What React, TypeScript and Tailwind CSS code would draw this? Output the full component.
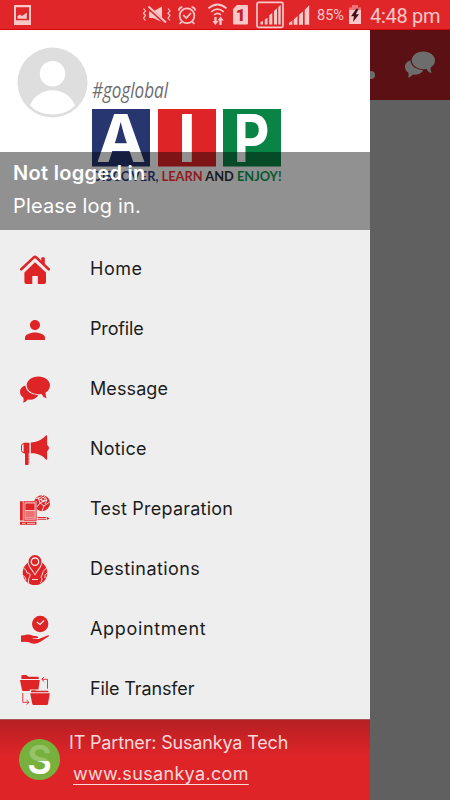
import type { ReactNode } from "react";
import { MdPerson } from "react-icons/md";

const Svg = ({ children }: { children: ReactNode }) => (
  <svg viewBox="0 0 30 30" className="size-[30px]" fill="currentColor">{children}</svg>
);

const HomeIcon = () => (
  <Svg>
    <path d="M1.3 14.3 13.8 2.4Q15 1.4 16.2 2.4L28.7 14.3" fill="none" stroke="currentColor" strokeWidth="2.6" strokeLinecap="round" />
    <path d="M21.3 3.2Q21.3 2.3 22.2 2.3H23.9Q24.8 2.3 24.8 3.2V10L21.3 6.5Z" />
    <path d="M15 7.3 26 17.6V27Q26 29 24 29H17.8V21H12.3V29H6.4Q4.4 29 4.4 27V17.6Z" />
  </Svg>
);

const ChatIcon = ({ id }: { id: string }) => (
  <Svg>
    <mask id={id}>
      <rect width="30" height="30" fill="white" />
      <ellipse cx="18.3" cy="10.3" rx="12.8" ry="10" fill="black" />
    </mask>
    <path mask={`url(#${id})`} d="M9 10C4 10 0 12.6 0 16.8C0 19.4 1.3 21.4 3.4 22.8Q4 25.5 3.2 27.7Q6.4 26.7 7.7 24.5Q14.5 25.4 18 20.7L19 10Z" />
    <path d="M18.3 1.4C24.8 1.4 30 5.4 30 10.3C30 13.5 28.3 16 25.5 17.6Q25.4 20.7 26.6 23.3Q22.8 22 21.5 18.9C13.6 20.2 6.7 16.2 6.7 10.3C6.7 5.4 11.8 1.4 18.3 1.4Z" />
  </Svg>
);

const NoticeIcon = () => (
  <Svg>
    <path d="M10.8 7.6C17 7.4 22 4.9 26 .3Q26.7-.2 27.1.8V9.8Q29 11 29 13Q29 15 27.1 16.3V24.3Q26.7 25.5 26 24.6C22 19.9 17 18.4 10.8 18.3Z" />
    <path d="M3.6 7.8H9.4V18.5H8.6V29.4Q7 30.4 5 29.4V18.5H3.6Z" />
    <path d="M4 8.6Q1.6 8.5 1.5 11V15.5Q1.6 17.5 4 17.5" fill="none" stroke="currentColor" />
    <path d="M9 20.5v1m0 2v1m0 2v1" stroke="currentColor" />
  </Svg>
);

const TestIcon = () => (
  <Svg>
    <circle cx="22" cy="8.2" r="8" />
    <g fill="none" stroke="#eee" strokeWidth=".9">
      <path d="M16 3.5Q21 3 23 0M18 2.5 20 8 27 5 24 1M20 8 17 12M20 8 24 11 29.7 7M24 11 22 16M27 5 25 9M19 4 25 6" />
      <circle cx="23" cy="4.5" r="2" />
    </g>
    <path d="M0 6H17V30H0Z" fill="#eee" />
    <path d="M0 6.3H2.8V25.6H0ZM3.5 6.3H16.6V25.7H3.5ZM0 26.8H16.4V29.8H0Z" />
    <path d="M4.5 7.3H15.7V24.7H4.5Z" fill="#f7bfc0" />
    <path d="M5.4 8.5H14.5V15H5.4ZM5.3 16.6H14.7V17.4H5.3ZM5.3 18.6H14.7V19.4H5.3ZM5.3 20.6H14.7V21.4H5.3ZM5.3 22.8H14.7V23.6H5.3Z" />
    <path d="M2 28.3H5.5M7 28.3H15" stroke="#eee" strokeWidth=".8" />
    <path d="M17.7 22H26V23H17.7ZM17.7 23.7H26V24.7H17.7ZM26.8 21.8 29.7 23.4 26.8 25Z" />
  </Svg>
);

const DestinationIcon = () => (
  <Svg>
    <circle cx="15" cy="17.7" r="12.3" />
    <g fill="none" stroke="#eee" strokeWidth=".9">
      <path d="M3.5 13Q7 15 7 18Q11 18 10 21Q8 23 8.5 28M26.5 13Q22.5 16 22 20Q20 22 22 24Q22 26 20.5 28M3 20.5Q6 22 6 25.5M27 18Q24 20 25 23M12 24.5H18" />
    </g>
    <path d="M15 20.7C13.5 17 7.7 12 7.7 7.2A7.3 7.3 0 0 1 22.3 7.2C22.3 12 16.5 17 15 20.7Z" fill="#eee" />
    <path d="M15 19C13.5 15.5 8.5 11.5 8.5 6.5A6.5 6.5 0 0 1 21.5 6.5C21.5 11.5 16.5 15.5 15 19Z" />
    <circle cx="15" cy="6.7" r="3.7" fill="none" stroke="#eee" strokeWidth="1.3" />
  </Svg>
);

const AppointmentIcon = () => (
  <Svg>
    <circle cx="20.2" cy="9" r="8.2" />
    <path d="M16.8 7 20 9.5 24 5.5" fill="none" stroke="#eee" strokeWidth="1.2" />
    <path d="M1 20.5Q4.5 20.5 7 19.4Q10 19.2 13 20.7L17 21.3Q18.8 21.8 18 23L12.5 23.2 12.6 23.8 18 24Q19.5 24.2 20.5 23.3L28.3 20.3Q29.5 20.4 28.8 21.3L20.5 26.7Q17 28.8 14 28.8Q11 28.3 9 27.2Q7 26.4 1 26.9Z" />
  </Svg>
);

const TransferIcon = () => (
  <Svg>
    <path d="M1.4 3V1Q1.4 0 2.5 0H6.2L8.5 1.8H18Q18.7 1.8 18.7 3V4H1.4Z" />
    <path d="M0 4.9H19.8L18.2 16H3.2Q2.2 16 2 15Z" />
    <path d="M9.7 14.5H30V19H28.6L27.3 30H11.8L9.8 19Z" fill="#eee" />
    <path d="M11 17.2V16.5Q11 15.2 12.2 15.2H15L16.5 15.8H27.5Q28.6 15.8 28.6 17.2ZM10.2 18.3H29.8L28 29Q27.8 30 26.7 30H13.6Q12.5 30 12.3 29Z" />
    <path d="M27.5 13.7V4.3H22M24.2 2 21.7 4.3 24.2 6.6M2.8 18V27.3H8.5M6.5 25 9 27.3 6.5 29.6" fill="none" stroke="currentColor" strokeWidth=".9" />
  </Svg>
);

const MENU = [
  { label: "Home", icon: <HomeIcon />, tracking: "tracking-[0.5px]" },
  { label: "Profile", icon: <MdPerson size={30} />, tracking: "tracking-[-0.15px]" },
  { label: "Message", icon: <ChatIcon id="chat-menu" />, tracking: "tracking-[0.1px]" },
  { label: "Notice", icon: <NoticeIcon />, tracking: "tracking-[0.2px]" },
  { label: "Test Preparation", icon: <TestIcon />, tracking: "tracking-[0.23px]" },
  { label: "Destinations", icon: <DestinationIcon />, tracking: "tracking-[0.42px]" },
  { label: "Appointment", icon: <AppointmentIcon />, tracking: "tracking-[0.67px]" },
  { label: "File Transfer", icon: <TransferIcon />, tracking: "tracking-[-0.12px]" },
];

const StatusBar = () => (
  <header className="flex h-[30px] items-center border-b border-[#d70408] bg-[#e12629] font-['Roboto',sans-serif] text-[#f8c8c9]">
    <svg viewBox="0 0 312 29" className="h-[29px] w-[312px] shrink-0" fill="currentColor">
      <path fillRule="evenodd" d="M14 5H31V25H14ZM16 7.3V20.3H29V7.3Z" />
      <path d="M17.5 18.8V16L20 14.6 22 16 26.8 12.8V18.8Z" />
      <path d="M149 11.5H153L162 6.5V22L153 18H149Z" />
      <path d="M148 7 165.5 23.2" stroke="#e12629" strokeWidth="3.6" />
      <path d="M148.5 6.5 166 22.5" stroke="currentColor" strokeWidth="1.8" />
      <path d="M143.5 8.5 145.5 11 143.5 13.2 145.5 15.6 143.5 18 145.5 20.5M168 8.5 170 11 168 13.2 170 15.6 168 18 170 20.5" fill="none" stroke="currentColor" strokeWidth="1.2" />
      <g fill="none" stroke="currentColor" strokeWidth="1.7">
        <circle cx="187" cy="15.8" r="7.4" />
        <path d="M183.3 15.2 186.3 18 191 13M178.7 10.7Q179 7.4 182.4 7.2M195.3 10.7Q195 7.4 191.6 7.2M181.8 21.5 179.7 24M192.2 21.5 194.3 24" />
        <path d="M208.5 8.3Q217.5.7 226.5 8.3M211.3 11.8Q217.5 6.5 223.7 11.8M214 14.8Q217.5 12 221 14.8" />
      </g>
      <path d="M214.3 17H216.6V21H218.5L215.4 25 212.4 21H214.3ZM219.3 25V20.5H217.5L220.6 16.5 223.8 20.5H221.7V25Z" />
      <path d="M237 5H247Q248 5 248 6V23.5Q248 24.5 247 24.5H234Q233 24.5 233 23.5V9Z" />
      <text x="240.6" y="20.7" fill="#c51d23" fontSize="17" fontWeight="900" textAnchor="middle">1</text>
      <rect x="257" y="2.3" width="26" height="25" rx="1.5" fill="none" stroke="currentColor" strokeWidth="1.7" />
      <path d="M260.5 24.5V22L263 21V24.5ZM264.8 24.5V19.5L267.5 17.8V24.5ZM269.2 24.5V15.5L272.3 12.8V24.5ZM274 24.5V11L277 8.3V24.5ZM278.3 24.5V7L280.7 5V24.5Z" />
      <path d="M289 24.8V23L292.3 20.6V24.8ZM293.7 24.8V19.5L297.5 16V24.8ZM299 24.8V14.8L303 11.5V24.8ZM304.7 24.8V10L309.2 5.3V24.8Z" />
    </svg>
    <span className="ml-[5px] w-[30px] shrink-0 pt-[3px] text-[14.5px] leading-none">85%</span>
    <svg viewBox="0 0 14 20" className="ml-px h-5 w-[14px] shrink-0">
      <path d="M4 0H10V2.5H13V5H1V2.5H4Z" fill="#ec7378" />
      <path d="M1 5H13V19H1Z" fill="#f8c8c9" />
      <path d="M8.5 3.5 3 11.2H6L5 17 11 9.3H7.8L10.5 4Z" fill="#421015" />
    </svg>
    <span className="ml-2 whitespace-nowrap pt-[2px] text-[20px] leading-none tracking-[-0.3px]">4:48 pm</span>
  </header>
);

const Logo = () => (
  <svg viewBox="0 0 370 200" className="h-[200px] w-[370px]">
    <circle cx="52.5" cy="52.5" r="35" fill="#dedede" />
    <circle cx="52.5" cy="43.7" r="12.7" fill="white" />
    <path d="M30 75.5C38 55.3 67 55.3 75 75.5C64 87.5 41 87.5 30 75.5Z" fill="white" />
    <text x="92" y="68" fill="#6c6c70" fontFamily="Open Sans, sans-serif" fontWeight="400" fontStyle="italic" fontSize="21" textLength="76" lengthAdjust="spacingAndGlyphs">#goglobal</text>
    <path d="M92 79H150V136.5H92Z" fill="#27366f" />
    <path d="M158 79H216V136.5H158Z" fill="#df2428" />
    <path d="M223 79H281V136.5H223Z" fill="#0a8445" />
    <g fill="white" fontFamily="Inter, sans-serif" fontWeight="700" fontSize="65.5">
      <text x="96" y="131.5" textLength="50" lengthAdjust="spacingAndGlyphs">A</text>
      <text x="187" y="131.5" textAnchor="middle">I</text>
      <text x="233.5" y="131.5" textLength="36" lengthAdjust="spacingAndGlyphs">P</text>
    </g>
    <text x="92" y="150.7" fontFamily="Lato, sans-serif" fontWeight="700" fontSize="13.5" textLength="189.5" lengthAdjust="spacingAndGlyphs">
      <tspan fill="#2e3f88">DISCOVER, </tspan>
      <tspan fill="#ff3238">LEARN </tspan>
      <tspan fill="#303030">AND </tspan>
      <tspan fill="#0c9c52">ENJOY!</tspan>
    </text>
  </svg>
);

const Drawer = () => (
  <aside className="flex w-[370px] shrink-0 flex-col bg-[#eee]">
    <section className="relative h-[200px] bg-white">
      <Logo />
      <div className="absolute inset-x-0 bottom-0 h-[78px] bg-black/43 pl-[13px] pt-[5px] text-white">
        <h1 className="text-[20px] font-semibold leading-[33px] tracking-[0.3px]">Not logged in</h1>
        <p className="text-[20px] leading-[33px] tracking-[0.15px]">Please log in.</p>
      </div>
    </section>
    <nav className="flex h-[489px] flex-col pt-[10px]">
      {MENU.map(({ label, icon, tracking }) => (
        <a key={label} className="flex h-[60px] shrink-0 items-center gap-10 pl-5 text-[#df2428]">
          {icon}
          <span className={`pb-1 text-[18px] text-[#1c1c1c] ${tracking}`}>{label}</span>
        </a>
      ))}
    </nav>
    <footer className="flex h-[81px] items-center border-t border-[#a95558] bg-linear-to-b from-[#b62024] to-[#df2428] to-45% pl-[19px] text-[#f8d9da]">
      <svg viewBox="0 0 40 40" className="mb-[2px] size-[41px] overflow-visible">
        <linearGradient id="s-fill" gradientUnits="userSpaceOnUse" x1="0" y1="0" x2="0" y2="40">
          <stop offset=".53" stopColor="#96c46b" />
          <stop offset=".55" stopColor="white" />
        </linearGradient>
        <circle cx="20" cy="20" r="20" fill="#78b03e" />
        <text x="8" y="34" fill="url(#s-fill)" fontFamily="Inter, sans-serif" fontWeight="600" fontSize="38" textLength="24" lengthAdjust="spacingAndGlyphs">S</text>
      </svg>
      <div className="mb-1 ml-[9px] whitespace-nowrap text-[18px] leading-[31px]">
        <p className="tracking-[-0.17px]">IT Partner: Susankya Tech</p>
        <a className="ml-1 tracking-[0.33px] underline decoration-1 underline-offset-4">www.susankya.com</a>
      </div>
    </footer>
  </aside>
);

export default function App() {
  return (
    <div className="flex h-[800px] w-[450px] flex-col overflow-hidden font-['Inter',sans-serif]">
      <StatusBar />
      <div className="flex flex-1">
        <Drawer />
        <main className="flex-1 bg-[#606060]">
          <div className="flex h-[70px] items-center bg-[#5b1113] text-[#6d6d6d]">
            <span className="mt-5 h-2 w-[5px] rounded-r-full bg-[#6d6d6d]" />
            <span className="ml-[30px]"><ChatIcon id="chat-bar" /></span>
          </div>
        </main>
      </div>
    </div>
  );
}
